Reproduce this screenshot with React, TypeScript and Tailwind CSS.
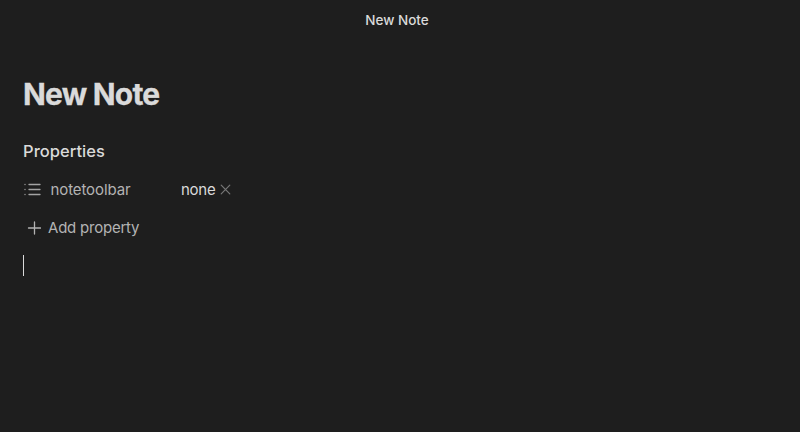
import React from "react";

function ListIcon() {
  return (
    <svg width="18" height="14" viewBox="0 0 18 14" fill="none" stroke="#a3a3a3" strokeWidth="1.3" strokeLinecap="round" className="mb-[2px] shrink-0">
      <path d="M6 2.5H17M6 7.5H17M6 12.5H17M2 2.5h.01M2 7.5h.01M2 12.5h.01" />
    </svg>
  );
}

function Property() {
  return (
    <div className="mt-3 flex h-[30px] items-center text-[15px] leading-[30px]">
      <div className="flex w-[158px] items-center gap-[9.5px] text-[#b3b3b3]">
        <ListIcon />
        <span className="tracking-[-0.1px]">notetoolbar</span>
      </div>
      <div className="flex items-center gap-[5px] text-[#dadada]">
        <span className="tracking-[-0.25px]">none</span>
        <svg width="11" height="11" viewBox="0 0 11 11" stroke="#777777" strokeWidth="1.2" strokeLinecap="round" className="mb-[2px]">
          <path d="M1.2 1.2l8.6 8.6M9.8 1.2l-8.6 8.6" />
        </svg>
      </div>
    </div>
  );
}

export default function App() {
  return (
    <main className="h-[432px] w-[800px] overflow-hidden bg-[#1e1e1e] font-['Inter',sans-serif] text-[#dadada]">
      <header className="flex h-10 items-center justify-center pr-[6px] text-[13.5px] font-medium tracking-[0px]">New Note</header>
      <section className="px-[23px] pt-[34px]">
        <h1 className="h-10 text-[30px] leading-10 font-bold tracking-[-0.8px] [-webkit-text-stroke:0.3px_currentColor]">New Note</h1>
        <h2 className="mt-[25px] h-6 text-[16.5px] leading-6 font-medium tracking-[0.04px]">Properties</h2>
        <Property />
        <div className="mt-2 flex h-[30px] items-center gap-[7px] pl-[4px] text-[15px] text-[#b3b3b3]">
          <svg width="14" height="14" viewBox="0 0 14 14" stroke="currentColor" strokeWidth="1.3" strokeLinecap="round" className="mb-px">
            <path d="M7.5 1v12M1.5 7h12" />
          </svg>
          <span className="tracking-[-0.22px]">Add property</span>
        </div>
        <div className="mt-3 h-[21px] w-px bg-[#dadada]" />
      </section>
    </main>
  );
}
